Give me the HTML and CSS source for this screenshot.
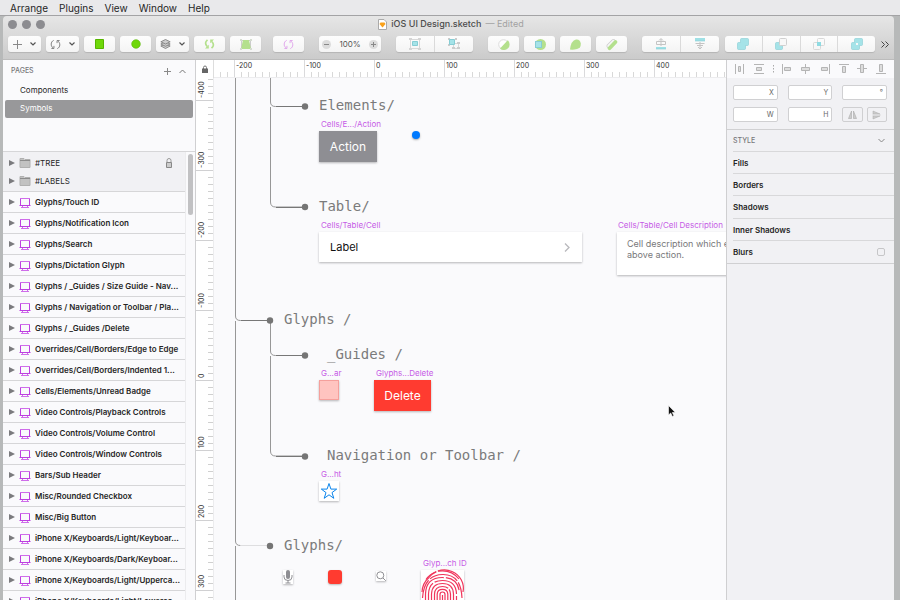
FILE: index.html
```html
<!DOCTYPE html>
<html lang="en">
<head>
<meta charset="utf-8">
<title>iOS UI Design.sketch</title>
<link rel="stylesheet" href="styles.css">
</head>
<body>
<svg class="defs" aria-hidden="true">
  <symbol id="artboard" viewBox="0 0 12 11"><path d="M1.500 1v7.500M10.500 1v7.500M.5 8.500h11" fill="none" stroke="#bd3fe0"/><path d="M1 1.500h10M3.500 9v1.500M8.500 9v1.500M2 10.500h8" fill="none" stroke="#cf6dea"/></symbol>
  <symbol id="folder" viewBox="0 0 12 10"><path d="M1 1h4l1 1h5v8H1z" fill="#c2c2c2"/><path d="M1 9.500V.5h4l1 1h5v8z" fill="none" stroke="#b0b0b0"/><path d="M1 2.500h10" stroke="#8c8c8c"/></symbol>
  <symbol id="tri" viewBox="0 0 6 6"><path d="M0 0l6 3-6 3z" fill="#7b7b7e"/></symbol>
  <symbol id="chev" viewBox="0 0 6 4"><path d="M.5.5L3 3 5.500.5" fill="none" stroke="#555" stroke-width="1.200"/></symbol>
  <symbol id="rotate" viewBox="0 0 12 12"><path d="M4 1.500C.5 3 .5 8 3.500 9.800M1.500 10.300h2.800V7.500M8 10.500c3.500-1.500 3.500-6.500.5-8.300M10.500 1.700H7.700v2.800" fill="none" stroke="currentColor"/></symbol>
</svg>

<nav class="menubar">
  <a href="#">Arrange</a><a href="#">Plugins</a><a href="#">View</a><a href="#">Window</a><a href="#">Help</a>
</nav>

<div class="window">
  <header class="chrome">
    <div class="titlebar">
      <div class="lights"><i></i><i></i><i></i></div>
      <h1 class="title">
        <svg width="9" height="11" viewBox="0 0 9 11"><path d="M.5.5h5.500l2.500 2.500v7.500h-8z" fill="#fff" stroke="#aaa"/><path d="M2.500 3.500h4L7.500 5 4.500 8.500 1.500 5z" fill="#f9a11b"/></svg>
        <span>iOS UI Design.sketch</span><small>— Edited</small>
      </h1>
    </div>
    <div class="toolbar">
      <div class="tools">
        <button class="btn drop" aria-label="Insert"><svg width="9" height="9"><path d="M4.500 0v9M0 4.500h9" stroke="#888"/></svg><svg width="6" height="4"><use href="#chev"/></svg></button>
        <button class="btn drop gray" aria-label="Data"><svg width="11" height="11"><use href="#rotate"/></svg><svg width="6" height="4"><use href="#chev"/></svg></button>
        <button class="btn" aria-label="Rectangle"><svg width="9" height="10"><path d="M.5.5h8v9h-8z" fill="#6fd80a" stroke="#56b400"/></svg></button>
        <button class="btn" aria-label="Oval"><svg width="10" height="10"><circle cx="5" cy="5" r="4.300" fill="#6fd80a" stroke="#56b400" stroke-width=".6"/></svg></button>
        <button class="btn drop" aria-label="Symbol"><svg width="11" height="10" viewBox="0 0 11 10"><g fill="#ccc" stroke="#777" stroke-width=".8"><path d="M.8 7L5.500 9.500 10.200 7 5.500 4.800z"/><path d="M.8 5L5.500 7.300 10.200 5 5.500 2.600z"/><path d="M.8 2.800L5.500 5l4.700-2.200L5.500.5z"/></g></svg><svg width="6" height="4"><use href="#chev"/></svg></button>
        <button class="btn" aria-label="Rotate"><svg width="11" height="10" viewBox="0 0 11 10"><path d="M3.500.8Q-.2 4 3.200 7.500M7.500 9.200Q11.200 6 7.800 2.500" fill="none" stroke="#b4e08d" stroke-width="1.700"/><path d="M1 9.500h3.800V5.800zM10 .5H6.200v3.700z" fill="#b4e08d"/></svg></button>
        <button class="btn" aria-label="Transform"><svg width="12" height="11"><path d="M1.500 1.500h9v8h-9z" fill="none" stroke="#ccc"/><path d="M3 1h6l2 9H1z" fill="#b4e08d"/><path d="M0 0h2v2H0zM10 0h2v2h-2zM0 9h2v2H0zM10 9h2v2h-2z" fill="#d5dcd0"/></svg></button>
      </div>
      <button class="btn pink" aria-label="Create Symbol"><svg width="11" height="11"><use href="#rotate"/></svg></button>
      <div class="zoom">
        <button aria-label="Zoom out"><svg width="9" height="9"><circle cx="4.500" cy="4.500" r="4.500" fill="#dcdcdc"/><path d="M2 4.500h5" stroke="#888"/></svg></button>
        <span>100%</span>
        <button aria-label="Zoom in"><svg width="9" height="9"><circle cx="4.500" cy="4.500" r="4.500" fill="#dcdcdc"/><path d="M2 4.500h5M4.500 2v5" stroke="#888"/></svg></button>
      </div>
      <div class="seg">
        <button aria-label="Group"><svg width="12" height="12"><path d="M1.500 1.500h9v9h-9z" fill="none" stroke="#d8d8d8"/><path d="M0 0h3v2H0zM9 0h3v2H9zM0 10h3v2H0zM9 10h3v2H9z" fill="#d5d5d5"/><path d="M3.500 3.500h5v4h-5z" fill="#a5e3e8" stroke="#86cdd4"/></svg></button>
        <button aria-label="Ungroup"><svg width="12" height="12"><path d="M5.500 5.500h5v5h-5z" fill="none" stroke="#d8d8d8"/><path d="M0 0h2v2H0zM7 0h2v2H7zM0 6h2v2H0zM4 9h3v2H4zM9 9h3v2H9zM9 4h3v2H9z" fill="#ccc"/><path d="M1.500 1.500h5v5h-5z" fill="#a5e3e8" stroke="#86cdd4"/></svg></button>
      </div>
      <div class="tools">
        <button class="btn" aria-label="Edit"><svg width="11" height="11"><circle cx="5.500" cy="5.500" r="4.800" fill="#fff" stroke="#ddd"/><path d="M9.800 1.200A5.500 5.500 0 0 1 2 9.500z" fill="#b4e08d"/></svg></button>
        <button class="btn" aria-label="Mask"><svg width="12" height="11"><circle cx="6.500" cy="5.500" r="5.500" fill="#b4e08d"/><rect x="1.500" y="2.500" width="6" height="6" fill="#a5e3e8" stroke="#86cdd4"/></svg></button>
        <button class="btn" aria-label="Flatten"><svg width="11" height="11"><path d="M0 10.500Q1 1.500 6 .5q4-.5 4.800 4Q11 9 7 10q-4 1-7 .5z" fill="#b4e08d"/></svg></button>
        <button class="btn" aria-label="Scissors"><svg width="12" height="11"><path d="M2.500 7L7.500 2" stroke="#ccc" stroke-width="4" stroke-linecap="round"/><path d="M2.500 7L7.500 2" stroke="#f6f6f6" stroke-width="2.500" stroke-linecap="round"/><path d="M3.500 9.200L9.500 3" stroke="#b4e08d" stroke-width="3.800" stroke-linecap="round"/></svg></button>
      </div>
      <div class="seg">
        <button aria-label="Forward"><svg width="12" height="12"><path d="M1.500 3.500h9v3h-9zM6 1v7M4 2.500L6 .5l2 2" fill="none" stroke="#c4c4c4"/><path d="M1 9h10v2H1z" fill="#9fe0e5"/><path d="M1 11h10" stroke="#86cdd4" stroke-width=".6"/></svg></button>
        <button aria-label="Backward"><svg width="12" height="12"><path d="M1.500 5.500h9M6 4v7M4 9l2 2 2-2M3 7.500h6" fill="none" stroke="#c4c4c4"/><path d="M1 0h10v3H1z" fill="#9fe0e5"/><path d="M1 3h10" stroke="#86cdd4" stroke-width=".6"/></svg></button>
      </div>
      <div class="seg bool">
        <button aria-label="Union"><svg width="12" height="12"><path d="M4.500.5h6q1 0 1 1v5q0 1-1 1h-2v3q0 1-1 1h-6q-1 0-1-1v-5q0-1 1-1h2v-3q0-1 1-1z" fill="#a5e3e8" stroke="#86cdd4" stroke-width=".6"/></svg></button>
        <button aria-label="Subtract"><svg width="12" height="12"><rect x=".5" y="4.500" width="7" height="7" rx="1" fill="#a5e3e8" stroke="#86cdd4" stroke-width=".6"/><rect x="4.500" y=".5" width="7" height="7" rx="1" fill="#f8f8f8" stroke="#d0d0d0"/></svg></button>
        <button aria-label="Intersect"><svg width="12" height="12"><rect x=".5" y="4.500" width="7" height="7" rx="1" fill="none" stroke="#d8d8d8"/><rect x="4.500" y=".5" width="7" height="7" rx="1" fill="none" stroke="#d8d8d8"/><path d="M4 4h4v4H4z" fill="#8fdbe2"/></svg></button>
        <button aria-label="Difference"><svg width="12" height="12"><path d="M4.500.5h6q1 0 1 1v5q0 1-1 1h-2v3q0 1-1 1h-6q-1 0-1-1v-5q0-1 1-1h2v-3q0-1 1-1z" fill="#a5e3e8" stroke="#86cdd4" stroke-width=".6"/><path d="M5 5h2v2H5z" fill="#f8f8f8"/></svg></button>
      </div>
      <button class="more" aria-label="More tools"><svg width="8" height="7"><path d="M.5.5l3 3-3 3M4.500.5l3 3-3 3" fill="none" stroke="#444"/></svg></button>
    </div>
  </header>

  <div class="workspace">
    <aside class="sidebar">
      <section class="pages">
        <div class="pages-head"><h2>PAGES</h2>
          <button aria-label="Add page"><svg width="7" height="7"><path d="M3.500 0v7M0 3.500h7" stroke="#888"/></svg></button>
          <button aria-label="Collapse pages"><svg width="7" height="5"><path d="M.5 4L3.500 1l3 3" fill="none" stroke="#777"/></svg></button>
        </div>
        <a class="page" href="#">Components</a>
        <a class="page current" href="#">Symbols</a>
      </section>
      <section class="layers">
        <ul class="layer-list">
          <li class="folders">
            <div class="folder"><svg class="tri"><use href="#tri"/></svg><svg class="fold"><use href="#folder"/></svg><span>#TREE</span>
              <svg class="lock" width="8" height="10"><path d="M2 4.500V2.500q0-2 2-2t2 2v2" fill="none" stroke="#999"/><path d="M1.500 4.500h5v5h-5z" fill="#ccc" stroke="#888"/></svg></div>
            <div class="folder"><svg class="tri"><use href="#tri"/></svg><svg class="fold"><use href="#folder"/></svg><span>#LABELS</span></div>
          </li>
          <li><svg class="tri"><use href="#tri"/></svg><svg class="art"><use href="#artboard"/></svg><span>Glyphs/Touch ID</span></li>
          <li><svg class="tri"><use href="#tri"/></svg><svg class="art"><use href="#artboard"/></svg><span>Glyphs/Notification Icon</span></li>
          <li><svg class="tri"><use href="#tri"/></svg><svg class="art"><use href="#artboard"/></svg><span>Glyphs/Search</span></li>
          <li><svg class="tri"><use href="#tri"/></svg><svg class="art"><use href="#artboard"/></svg><span>Glyphs/Dictation Glyph</span></li>
          <li><svg class="tri"><use href="#tri"/></svg><svg class="art"><use href="#artboard"/></svg><span>Glyphs / _Guides / Size Guide - Nav...</span></li>
          <li><svg class="tri"><use href="#tri"/></svg><svg class="art"><use href="#artboard"/></svg><span>Glyphs / Navigation or Toolbar / Pla...</span></li>
          <li><svg class="tri"><use href="#tri"/></svg><svg class="art"><use href="#artboard"/></svg><span>Glyphs / _Guides /Delete</span></li>
          <li><svg class="tri"><use href="#tri"/></svg><svg class="art"><use href="#artboard"/></svg><span>Overrides/Cell/Borders/Edge to Edge</span></li>
          <li><svg class="tri"><use href="#tri"/></svg><svg class="art"><use href="#artboard"/></svg><span>Overrides/Cell/Borders/Indented 1...</span></li>
          <li><svg class="tri"><use href="#tri"/></svg><svg class="art"><use href="#artboard"/></svg><span>Cells/Elements/Unread Badge</span></li>
          <li><svg class="tri"><use href="#tri"/></svg><svg class="art"><use href="#artboard"/></svg><span>Video Controls/Playback Controls</span></li>
          <li><svg class="tri"><use href="#tri"/></svg><svg class="art"><use href="#artboard"/></svg><span>Video Controls/Volume Control</span></li>
          <li><svg class="tri"><use href="#tri"/></svg><svg class="art"><use href="#artboard"/></svg><span>Video Controls/Window Controls</span></li>
          <li><svg class="tri"><use href="#tri"/></svg><svg class="art"><use href="#artboard"/></svg><span>Bars/Sub Header</span></li>
          <li><svg class="tri"><use href="#tri"/></svg><svg class="art"><use href="#artboard"/></svg><span>Misc/Rounded Checkbox</span></li>
          <li><svg class="tri"><use href="#tri"/></svg><svg class="art"><use href="#artboard"/></svg><span>Misc/Big Button</span></li>
          <li><svg class="tri"><use href="#tri"/></svg><svg class="art"><use href="#artboard"/></svg><span>iPhone X/Keyboards/Light/Keyboar...</span></li>
          <li><svg class="tri"><use href="#tri"/></svg><svg class="art"><use href="#artboard"/></svg><span>iPhone X/Keyboards/Dark/Keyboar...</span></li>
          <li><svg class="tri"><use href="#tri"/></svg><svg class="art"><use href="#artboard"/></svg><span>iPhone X/Keyboards/Light/Upperca...</span></li>
          <li><svg class="tri"><use href="#tri"/></svg><svg class="art"><use href="#artboard"/></svg><span>iPhone X/Keyboards/Light/Lowerca...</span></li>
        </ul>
        <div class="track"><div class="thumb"></div></div>
      </section>
    </aside>

    <main class="stage">
      <div class="corner"><svg width="6" height="8"><path d="M1.500 4V2.500q0-1.500 1.500-1.500t1.500 1.500V4" fill="none" stroke="#777"/><path d="M0 3.500h6V8H0z" fill="#666"/></svg></div>
      <div class="ruler-x"><span></span><span>-200</span><span>-100</span><span>0</span><span>100</span><span>200</span><span>300</span><span>400</span></div>
      <div class="ruler-y"><span>-400</span><span>-300</span><span>-200</span><span>-100</span><span>0</span><span>100</span><span>200</span><span>300</span></div>
      <div class="canvas">
        <svg class="tree" width="520" height="522" viewBox="214 78 520 522">
          <g fill="none" stroke="#979797">
            <path d="M235.500 78v238q0 4.500 5 4.500h30M235.500 321v220q0 4.500 5 4.500M235.500 546v60"/>
            <path d="M270.500 78v24q0 4.500 5 4.500h30M270.500 107v95q0 5 5 5h30"/>
            <path d="M270.500 321v30q0 4.500 5 4.500h30M270.500 356v95q0 5 5 5h30"/>
            <path d="M240.500 545.500h27" stroke="#dedee0"/>
          </g>
          <g stroke="#777"><path d="M241 320.500h29M276 106.500h29M276 207.500h29M276 355.500h29M276 456.500h29"/></g>
          <g fill="#757575"><circle cx="270" cy="320.500" r="3.200"/><circle cx="270" cy="546" r="3.200"/><circle cx="305" cy="106.500" r="3.200"/><circle cx="305" cy="207" r="3.200"/><circle cx="305" cy="355.500" r="3.200"/><circle cx="305" cy="456.500" r="3.200"/></g>
        </svg>

        <h3 class="head h-elements">Elements/</h3>
        <span class="tag t-action">Cells/E.../Action</span>
        <div class="art-box action">Action</div>
        <div class="badge"></div>

        <h3 class="head h-table">Table/</h3>
        <span class="tag t-cell">Cells/Table/Cell</span>
        <div class="art-box cell"><span>Label</span><svg width="6" height="9"><path d="M1 .5l4 4-4 4" fill="none" stroke="#b8b8bc" stroke-width="1.300"/></svg></div>
        <span class="tag t-desc">Cells/Table/Cell Description</span>
        <div class="art-box desc">Cell description which e<br>above action.</div>

        <h3 class="head h-glyphs">Glyphs /</h3>
        <h3 class="head h-guides">_Guides /</h3>
        <span class="tag t-bar">G...ar</span>
        <div class="art-box guide"></div>
        <span class="tag t-delete">Glyphs...Delete</span>
        <div class="art-box delete">Delete</div>

        <h3 class="head h-nav">Navigation or Toolbar /</h3>
        <span class="tag t-light">G...ht</span>
        <div class="art-box star"><svg width="18" height="18"><path d="M9 1.500l1.900 5.600h5.800l-4.700 3.500 1.800 5.700L9 12.800l-4.800 3.500L6 10.600 1.300 7.100h5.800z" fill="none" stroke="#0a84ec"/></svg></div>

        <h3 class="head h-glyphs2">Glyphs/</h3>
        <div class="art-box mic"><svg width="10" height="14"><rect x="3" y="0" width="4" height="9" rx="2" fill="#8e8e93"/><path d="M1 5v2q0 3.500 4 3.500T9 7V5M5 10.500V13M2.500 13h5" fill="none" stroke="#8e8e93"/></svg></div>
        <div class="record"></div>
        <div class="art-box search"><svg width="10" height="10"><circle cx="4.300" cy="4.300" r="3.500" fill="none" stroke="#8e8e93"/><path d="M7 7l2.800 2.800" stroke="#8e8e93"/></svg></div>
        <span class="tag t-touch">Glyp...ch ID</span>
        <div class="art-box touch">
          <svg width="43" height="46" viewBox="0 0 43 46"><g fill="none" stroke="#f0365c" stroke-width="1.200">
            <path d="M5 9.500A21 20 0 0 1 15 1.800M17 1.200Q30-1 38 9"/>
            <path d="M1 22Q1.500 13 8 7.500A19 18.500 0 0 1 42 22" stroke-dasharray="26 1.500 40"/>
            <path d="M1.500 28Q3 5 21.500 4.500T41 28" stroke-dasharray="19 2 30 2"/>
            <path d="M4.500 30V24Q5 7.500 21.500 7.500T38.500 24v6" stroke-dasharray="34 2 20"/>
            <path d="M7.500 34V24Q8 10.500 21.500 10.500T35.500 24v10" stroke-dasharray="22 2 30 2"/>
            <path d="M10.500 34V24Q11 13.500 21.500 13.500T32.500 24v10"/>
            <path d="M13.500 34V24Q14 16.500 21.500 16.500T29.500 24v10" stroke-dasharray="28 1.500"/>
            <path d="M16.200 34V24Q16.500 19.300 21.500 19.300T26.800 24v10"/>
            <path d="M19 34V24.500q0-2.500 2.500-2.500t2.500 2.500V34M21.500 25v9"/>
          </g></svg>
        </div>
        <svg class="cursor" width="8" height="12"><path d="M.5.5v9.500l2.200-2 1.700 3.500 1.500-.7-1.600-3.300h3z" fill="#111" stroke="#fff" stroke-width=".6"/></svg>
      </div>
    </main>

    <aside class="inspector">
      <div class="align">
        <button aria-label="Distribute horizontally"><svg width="10" height="10"><path d="M.5 0v10M8.500 0v10" stroke="#b5b5b5"/><path d="M3.500 2.500h2v5h-2z" fill="#ddd" stroke="#b5b5b5"/></svg></button>
        <button aria-label="Distribute vertically"><svg width="10" height="10"><path d="M0 .5h10M0 9.500h10" stroke="#b5b5b5"/><path d="M2.500 3.500h5v3h-5z" fill="#ddd" stroke="#b5b5b5"/></svg></button>
        <svg class="dots" width="1" height="9"><path d="M.5 0v9" stroke="#aaa" stroke-dasharray="1.500 1.500"/></svg>
        <button aria-label="Align left"><svg width="10" height="10"><path d="M.5 0v10" stroke="#b5b5b5"/><path d="M2.500 3.500h6v3h-6z" fill="#ddd" stroke="#b5b5b5"/></svg></button>
        <button aria-label="Align center"><svg width="10" height="10"><path d="M4.500 0v10" stroke="#b5b5b5"/><path d="M.5 3.500h8v3h-8z" fill="#ddd" stroke="#b5b5b5"/></svg></button>
        <button aria-label="Align right"><svg width="10" height="10"><path d="M9.500 0v10" stroke="#b5b5b5"/><path d="M1.500 3.500h6v3h-6z" fill="#ddd" stroke="#b5b5b5"/></svg></button>
        <button aria-label="Align top"><svg width="10" height="10"><path d="M0 .5h10" stroke="#b5b5b5"/><path d="M3.500 2.500h3v6h-3z" fill="#ddd" stroke="#b5b5b5"/></svg></button>
        <button aria-label="Align middle"><svg width="10" height="10"><path d="M0 4.500h10" stroke="#b5b5b5"/><path d="M3.500.5h3v8h-3z" fill="#ddd" stroke="#b5b5b5"/></svg></button>
        <button aria-label="Align bottom"><svg width="10" height="10"><path d="M0 9.500h10" stroke="#b5b5b5"/><path d="M3.500.5h3v7h-3z" fill="#ddd" stroke="#b5b5b5"/></svg></button>
      </div>
      <div class="geometry">
        <label class="field"><input type="text"><span>X</span></label>
        <label class="field"><input type="text"><span>Y</span></label>
        <label class="field"><input type="text"><span>°</span></label>
        <label class="field"><input type="text"><span>W</span></label>
        <label class="field"><input type="text"><span>H</span></label>
        <div class="flips">
          <button aria-label="Flip horizontally"><svg width="9" height="8"><path d="M3.500 0v7.500H.5zM5.500 0v7.500h3z" fill="#ccc" stroke="#aaa" stroke-width=".6"/></svg></button>
          <button aria-label="Flip vertically"><svg width="9" height="8"><path d="M1 0v3h7zM1 8V5h7z" fill="#ccc" stroke="#aaa" stroke-width=".5"/><path d="M0 4h9" stroke="#ccc" stroke-width=".6"/></svg></button>
        </div>
      </div>
      <div class="styles">
        <div class="style-row caption"><h2>STYLE</h2><svg width="7" height="5"><path d="M.5 1l3 3 3-3" fill="none" stroke="#888"/></svg></div>
        <div class="style-row">Fills</div>
        <div class="style-row">Borders</div>
        <div class="style-row">Shadows</div>
        <div class="style-row">Inner Shadows</div>
        <div class="style-row last"><label for="blurs">Blurs</label><input type="checkbox" id="blurs"></div>
      </div>
    </aside>
  </div>
</div>
</body>
</html>
```
FILE: styles.css
```css
* { box-sizing: border-box; }
body {
  margin: 0; height: 100vh; overflow: hidden;
  display: flex; flex-direction: column;
  background: #b7b9b9;
  font: 8px/12px Inter, "Liberation Sans", sans-serif;
  color: #262626;
}
h1, h2, h3, ul { margin: 0; padding: 0; font: inherit; list-style: none; }
a { color: inherit; text-decoration: none; }
button { border: 0; padding: 0; background: none; font: inherit; color: inherit; display: flex; align-items: center; justify-content: center; }
svg { display: block; flex: none; overflow: visible; }
.defs { position: absolute; width: 0; height: 0; }

.menubar {
  flex: none; height: 16px; padding: 0 10px; display: flex; gap: 11px;
  background: #e9e9eb; border-bottom: 1px solid #a3a3a5;
  font-size: 10px; line-height: 16px;
}

.window { flex: 1; min-height: 0; margin: 0 6px 0 3px; display: flex; flex-direction: column; border-radius: 4px 4px 0 0; overflow: hidden; }
.chrome { flex: none; height: 44px; background: linear-gradient(#e6e6e6, #cbcbcb); border-bottom: 1px solid #bcbcbc; }
.titlebar { display: grid; grid-template-columns: 1fr auto 1fr; align-items: center; height: 16px; padding-left: 5px; }
.lights { display: flex; gap: 5px; }
.lights i { width: 9px; height: 9px; border-radius: 50%; background: #8c8c90; }
.title { display: flex; align-items: center; gap: 4px; font-size: 9px; font-weight: 500; color: #4c4c4c; }
.title small { font-size: 9px; font-weight: 400; color: #a2a2a2; }

.toolbar { display: flex; align-items: center; gap: 15px; padding: 4px 5px; }
.tools { display: flex; gap: 5px; }
.btn, .zoom, .seg { height: 16px; border-radius: 3px; background: linear-gradient(#fdfdfd, #f4f4f4); box-shadow: 0 1px 1px #b4b4b4; }
.btn { width: 31px; }
.btn.drop { width: 33px; gap: 8px; }
.gray { color: #777; }
.btn.pink { color: #dea0ea; margin-left: -3px; }
.zoom { width: 62px; display: flex; align-items: center; justify-content: space-between; padding: 0 3px; color: #555; }
.seg { display: flex; width: 77px; }
.seg button { flex: 1; }
.seg button + button { border-left: 1px solid #dadada; }
.seg.bool { width: 150px; margin-left: -9px; }
.more { margin-left: -9px; }

.workspace { flex: 1; min-height: 0; display: flex; }

.sidebar { flex: none; width: 193px; display: flex; flex-direction: column; background: #fafafc; border-right: 1px solid #d0d0d2; }
.pages { flex: none; height: 92px; border-bottom: 1px solid #d6d6d8; padding: 0 2px; }
.pages-head { display: flex; align-items: center; height: 22px; gap: 8px; padding: 0 7px 0 6px; color: #77777a; }
.pages-head h2 { margin-right: auto; font-size: 7px; font-weight: 500; }
.page { display: block; height: 18px; padding-left: 15px; line-height: 17px; border-radius: 2px; }
.page.current { background: #98989a; color: #fff; }
.layers { flex: 1; min-height: 0; display: flex; overflow: hidden; }
.layer-list { flex: 1; min-width: 0; }
.layer-list li { display: flex; align-items: center; height: 21px; padding-left: 6px; border-bottom: 1px solid #d6d6d8; font-weight: 600; white-space: nowrap; }
.layer-list .folders { display: block; height: 40px; padding: 2px 0 1px 6px; background: #f1f1f4; font-weight: 400; }
.folder { display: flex; align-items: center; height: 18px; }
.tri { width: 6px; height: 6px; margin-right: 4px; }
.art { width: 12px; height: 11px; margin-right: 4px; }
.fold { width: 12px; height: 10px; margin-right: 4px; }
.lock { margin: 0 12px 0 auto; }
.track { flex: none; width: 10px; padding: 2px 2px; border-left: 1px solid #ececee; }
.thumb { width: 5px; height: 61px; border-radius: 3px; background: #c1c1c3; }

.stage { flex: 1; min-width: 0; display: grid; grid-template: 18px 1fr / 18px 1fr; background: #fafafc; }
.corner { display: flex; align-items: center; justify-content: center; background: #fff; border-right: 1px solid #ddd; }
.ruler-x, .ruler-y { display: flex; overflow: hidden; color: #333; font-size: 7px; }
.ruler-x { background: repeating-linear-gradient(90deg, #d8d8d8 0 1px, transparent 1px 7px) 6px 100% / 700px 5px repeat-x #fff; border-bottom: 1px solid #ececee; }
.ruler-x span { flex: none; width: 70px; padding-left: 1px; border-left: 1px solid #dadadc; }
.ruler-x span:first-child { width: 20px; border: 0; }
.ruler-y { flex-direction: column; border-right: 1px solid #ececee; background: repeating-linear-gradient(#d0d0d0 0 1px, transparent 1px 7px) 100% 1px / 5px 700px repeat-y #fff; }
.ruler-y span { flex: none; height: 70px; writing-mode: vertical-rl; transform: rotate(180deg); border-top: 1px solid #d0d0d2; padding-top: 2px; line-height: 12px; }
.ruler-y span:first-child { height: 23px; }

.canvas { position: relative; overflow: hidden; }
.canvas > * { position: absolute; }
.tree { left: 0; top: 0; }
.head { font: 14px/18px "DejaVu Sans Mono", monospace; color: #7b7b7b; white-space: pre; }
.tag { color: #c65be6; line-height: 10px; font-size: 8px; white-space: nowrap; }
.art-box { background: #fff; box-shadow: 0 1px 2px #b5b5b8; display: flex; align-items: center; justify-content: center; }

.h-elements { left: 105px; top: 18px; }
.t-action { left: 107px; top: 41px; }
.action { left: 105px; top: 53px; width: 58px; height: 31px; background: #8e8e93; color: #fff; font-size: 12px; }
.badge { left: 198px; top: 53px; width: 8px; height: 8px; border-radius: 50%; background: #007aff; box-shadow: 0 1px 2px #aaa; }

.h-table { left: 105px; top: 119px; }
.t-cell { left: 107px; top: 142px; }
.cell { left: 105px; top: 154px; width: 263px; height: 30px; padding: 0 12px 0 11px; justify-content: space-between; color: #111; font-size: 11px; }
.t-desc { left: 404px; top: 142px; }
.desc { left: 403px; top: 154px; width: 263px; height: 43px; padding: 6px 10px; display: block; font-size: 9px; line-height: 11px; color: #78787a; }

.h-glyphs { left: 70px; top: 232px; }
.h-guides { left: 113px; top: 267px; }
.t-bar { left: 107px; top: 290px; }
.guide { left: 105px; top: 302px; width: 20px; height: 20px; background: #ffc4c0; border: 1px solid #f5a09c; }
.t-delete { left: 162px; top: 290px; }
.delete { left: 160px; top: 302px; width: 57px; height: 31px; background: #ff3b30; color: #fff; font-size: 12px; }

.h-nav { left: 113px; top: 368px; }
.t-light { left: 107px; top: 391px; }
.star { left: 105px; top: 403px; width: 20px; height: 20px; }

.h-glyphs2 { left: 70px; top: 458px; }
.mic { left: 69px; top: 492px; width: 10px; height: 14px; }
.record { left: 114px; top: 492px; width: 14px; height: 14px; border-radius: 3px; background: #ff3b30; box-shadow: 0 1px 2px #bbb; }
.search { left: 162px; top: 493px; width: 10px; height: 10px; }
.t-touch { left: 209px; top: 480px; }
.touch { left: 207px; top: 492px; width: 43px; height: 46px; }
.cursor { left: 454px; top: 327px; }

.inspector { flex: none; width: 168px; background: #f1f1f4; border-left: 1px solid #cfcfd1; }
.align { display: flex; align-items: center; justify-content: space-between; height: 18px; padding: 0 8px; background: #fafafc; }
.geometry { display: grid; grid-template-columns: repeat(3, 1fr); gap: 7px 10px; padding: 7px 7px 7px 6px; border-bottom: 1px solid #d0d0d2; }
.field { display: flex; align-items: center; height: 15px; padding-right: 3px; border: 1px solid #d0d0d2; border-radius: 2px; background: #fff; color: #666; font-size: 7px; }
.field input { flex: 1; min-width: 0; width: 0; height: 11px; border: 0; padding: 0 2px; background: none; font: inherit; outline: 0; }
.flips { display: flex; gap: 4px; }
.flips button { flex: 1; height: 15px; border: 1px solid #cfcfd1; border-radius: 2px; }
.styles { border-bottom: 1px solid #d0d0d2; padding-left: 6px; }
.style-row { display: flex; align-items: center; justify-content: space-between; height: 22px; padding-right: 9px; border-bottom: 1px solid #d8d8da; font-weight: 600; }
.style-row:nth-child(4) { height: 23px; }
.style-row.caption { color: #77777a; font-weight: 500; font-size: 7px; }
.style-row.last { border: 0; }
.style-row input { appearance: none; width: 8px; height: 8px; margin: 0; border: 1px solid #c6c6c8; border-radius: 2px; }
```
